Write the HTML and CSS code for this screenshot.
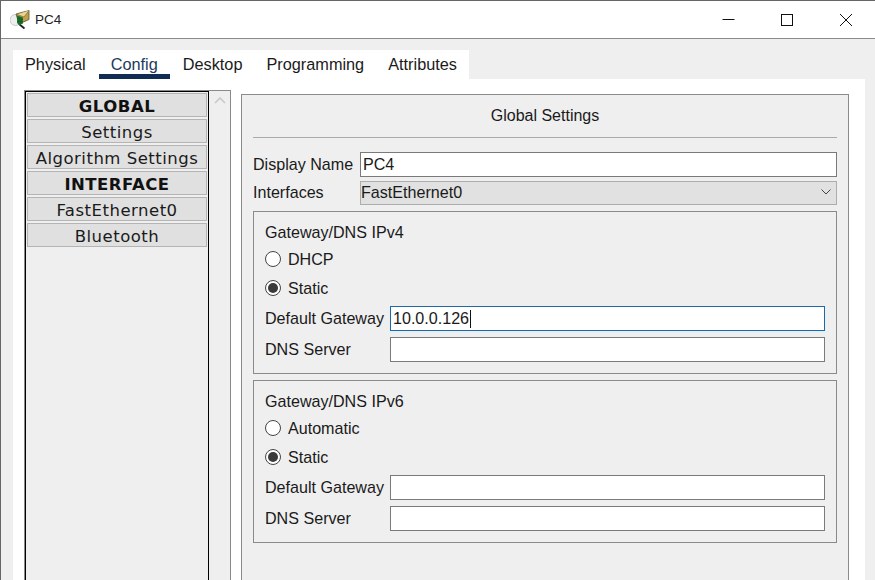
FILE: index.html
```html
<!DOCTYPE html>
<html lang="en">
<head>
    <meta charset="UTF-8">
    <title>PC4</title>
    <link rel="stylesheet" href="styles.css">
</head>
<body>
    <div class="window">
        <div class="titlebar">
            <svg class="app-icon" width="20" height="20" viewBox="0 0 20 20">
                <ellipse cx="5.500" cy="10" rx="5.500" ry="5.500" fill="#eeeeee" stroke="#c8c8c8"/>
                <path d="M9 14l5.500 4.500" stroke="#222" stroke-width="1.800"/>
                <path d="M6 4l13-3.500v9l-10 4.500z" fill="#c2a04a" stroke="#5d5330" stroke-width="0.800"/>
                <path d="M7 4.500l7 2.500 5-6.500" fill="#e9d591" stroke="#6b5f36" stroke-width="0.600"/>
                <path d="M7 5.500l6 2v6l-4 1.500-2-2z" fill="#1f7a33"/>
                <path d="M9 6v8M11 7v7M7 8.500l6 1M7 11l6 1" stroke="#0c4a1c" stroke-width="0.500"/>
            </svg>
            <span class="title">PC4</span>
            <div class="window-buttons">
                <svg width="14" height="14" viewBox="0 0 14 14"><path d="M1.500 6.500h12" stroke="#111" fill="none"/></svg>
                <svg width="14" height="14" viewBox="0 0 14 14"><rect x="1.500" y="1.500" width="11" height="11" stroke="#111" fill="none"/></svg>
                <svg width="14" height="14" viewBox="0 0 14 14"><path d="M1 1l12 12M13 1l-12 12" stroke="#111" fill="none"/></svg>
            </div>
        </div>

        <div class="content">
            <div class="tabs">
                <div class="tab">Physical</div>
                <div class="tab active">Config</div>
                <div class="tab">Desktop</div>
                <div class="tab">Programming</div>
                <div class="tab">Attributes</div>
            </div>

            <div class="tab-panel">
                <div class="sidebar">
                    <div class="side-list">
                        <div class="side-item bold">GLOBAL</div>
                        <div class="side-item">Settings</div>
                        <div class="side-item">Algorithm Settings</div>
                        <div class="side-item bold">INTERFACE</div>
                        <div class="side-item">FastEthernet0</div>
                        <div class="side-item">Bluetooth</div>
                    </div>
                    <div class="scrollbar">
                        <svg width="12" height="7" viewBox="0 0 12 7"><path d="M1 6l5-5 5 5" stroke="#c8c8c8" stroke-width="1.500" fill="none"/></svg>
                    </div>
                </div>

                <div class="settings">
                    <div class="settings-title">Global Settings</div>
                    <div class="row name-row">
                        <label class="row-label">Display Name</label>
                        <div class="input">PC4</div>
                    </div>
                    <div class="row iface-row">
                        <label class="row-label">Interfaces</label>
                        <div class="select">
                            <span>FastEthernet0</span>
                            <svg width="10" height="6" viewBox="0 0 10 6"><path d="M0.500 0.500l4.500 4.500 4.500-4.500" stroke="#444" fill="none"/></svg>
                        </div>
                    </div>

                    <div class="group">
                        <div class="group-title">Gateway/DNS IPv4</div>
                        <div class="radio-row"><span class="radio"></span>DHCP</div>
                        <div class="radio-row"><span class="radio on"></span>Static</div>
                        <div class="row field-row">
                            <label class="field-label">Default Gateway</label>
                            <div class="input focused">10.0.0.126<span class="caret"></span></div>
                        </div>
                        <div class="row field-row">
                            <label class="field-label">DNS Server</label>
                            <div class="input"></div>
                        </div>
                    </div>

                    <div class="group">
                        <div class="group-title">Gateway/DNS IPv6</div>
                        <div class="radio-row"><span class="radio"></span>Automatic</div>
                        <div class="radio-row"><span class="radio on"></span>Static</div>
                        <div class="row field-row">
                            <label class="field-label">Default Gateway</label>
                            <div class="input"></div>
                        </div>
                        <div class="row field-row">
                            <label class="field-label">DNS Server</label>
                            <div class="input"></div>
                        </div>
                    </div>
                </div>
            </div>
        </div>
    </div>
</body>
</html>
```

FILE: styles.css
```css
html, body {
    margin: 0;
    height: 100%;
    overflow: hidden;
}
body {
    font-family: "Liberation Sans", Arial, sans-serif;
    font-size: 16.100px;
    color: #1a1a1a;
    background-color: #efefef;
}
.window {
    height: 580px;
    box-sizing: border-box;
    display: flex;
    flex-direction: column;
    border-top: 1px solid #666;
    border-left: 1px solid #666;
    overflow: hidden;
}
.titlebar {
    height: 37px;
    flex: none;
    display: flex;
    align-items: center;
    background: #fff;
    border-bottom: 1px solid #8a8a8a;
    padding-left: 9px;
}
.app-icon {
    margin-right: 5px;
}
.title {
    font-size: 13.500px;
    color: #222;
}
.window-buttons {
    margin-left: auto;
    display: flex;
    gap: 45px;
    padding-right: 22px;
}
.content {
    flex: 1;
    min-height: 0;
    display: flex;
    flex-direction: column;
    padding: 11px 10px 0 12px;
}
.tabs {
    display: flex;
    align-self: flex-start;
    height: 29px;
    background: #fff;
    padding: 0 12px;
    gap: 24px;
    font-size: 16.300px;
}
.tab {
    padding-top: 5px;
    line-height: 19px;
    box-sizing: border-box;
    height: 29px;
}
.tab.active {
    color: #1c3a5e;
    border-bottom: 5px solid #0f2c52;
    margin: 0 -11px;
    padding: 5px 12px 0;
}
.tab-panel {
    flex: 1;
    min-height: 0;
    display: flex;
    align-items: flex-start;
    background: #fff;
    padding: 11px 16px 0 11px;
    gap: 10px;
}
.sidebar {
    width: 205px;
    height: 500px;
    flex: none;
    display: flex;
    border: 1px solid #8a8a8a;
    background: #efefef;
}
.side-list {
    width: 184px;
    box-sizing: border-box;
    border: 1px solid #000;
    padding: 1px 1px 0 1px;
    display: flex;
    flex-direction: column;
    gap: 2px;
}
.side-item {
    height: 24px;
    box-sizing: border-box;
    border: 1px solid #b4b4b4;
    background: #e0e0e0;
    text-align: center;
    font-family: "DejaVu Sans", Verdana, sans-serif;
    font-size: 16.500px;
    letter-spacing: 0.500px;
    line-height: 25px;
    white-space: nowrap;
}
.side-item.bold {
    font-weight: bold;
    color: #111;
}
.scrollbar {
    flex: 1;
    display: flex;
    justify-content: center;
    padding-top: 6px;
    align-items: flex-start;
}
.settings {
    flex: 1;
    height: 500px;
    margin-top: 4px;
    box-sizing: border-box;
    border: 1px solid #8a8a8a;
    background: #efefef;
    padding: 0 11px;
}
.settings-title {
    height: 42px;
    line-height: 41px;
    font-size: 16px;
    text-align: center;
    border-bottom: 1px solid #aaa;
    margin-bottom: 14px;
}
.row {
    display: flex;
    align-items: center;
}
.row-label {
    width: 107px;
    flex: none;
}
.name-row {
    height: 25px;
}
.iface-row {
    height: 24px;
    margin-top: 4px;
}
.iface-row .row-label {
    padding-bottom: 2px;
}
.input {
    flex: 1;
    height: 25px;
    box-sizing: border-box;
    border: 1px solid #7a7a7a;
    background: #fff;
    padding-left: 2px;
    line-height: 23px;
}
.input.focused {
    border-color: #1f6aa5;
    box-shadow: 0 1px 2px #d8eefc;
}
.caret {
    display: inline-block;
    width: 1px;
    height: 18px;
    margin-left: 1px;
    background: #111;
    vertical-align: -4px;
}
.select {
    flex: 1;
    height: 24px;
    box-sizing: border-box;
    border: 1px solid #adadad;
    background: #e1e1e1;
    display: flex;
    align-items: center;
    justify-content: space-between;
    padding: 0 5px 2px 0;
}
.group {
    margin-top: 6px;
    height: 163px;
    box-sizing: border-box;
    border: 1px solid #8a8a8a;
    padding: 0 11px;
}
.group-title {
    height: 29px;
    line-height: 40px;
    margin-bottom: 4px;
}
.radio-row {
    height: 29px;
    display: flex;
    align-items: center;
    gap: 7px;
}
.radio {
    width: 16px;
    height: 16px;
    margin-bottom: 2px;
    box-sizing: border-box;
    border: 1px solid #444;
    border-radius: 50%;
    background: #fff;
    display: flex;
    align-items: center;
    justify-content: center;
}
.radio.on::after {
    content: "";
    width: 10px;
    height: 10px;
    border-radius: 50%;
    background: #3a3a3a;
}
.field-row {
    margin-bottom: 6px;
}
.radio-row + .field-row {
    margin-top: 3px;
}
.field-label {
    width: 125px;
    flex: none;
    white-space: nowrap;
}
```
